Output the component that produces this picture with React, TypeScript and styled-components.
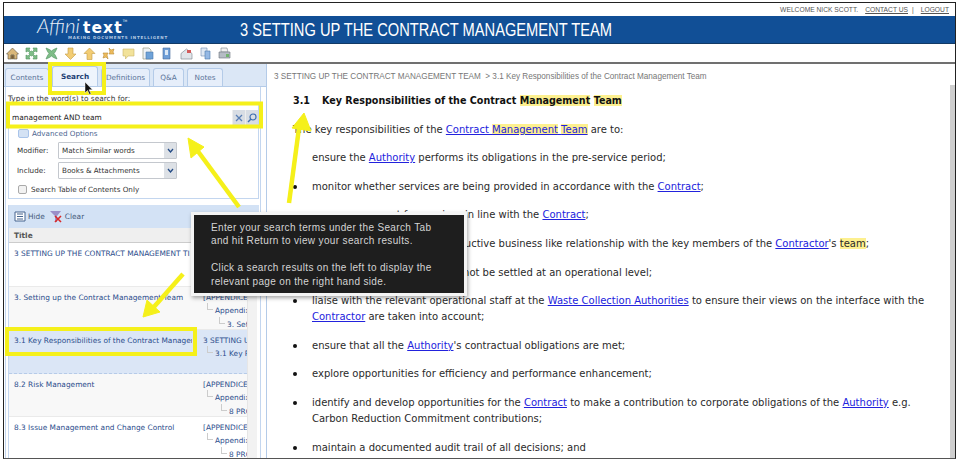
import React from 'react';
import styled, { createGlobalStyle } from 'styled-components';

const Global = createGlobalStyle`
  html, body { margin: 0; padding: 0; background: #fff; overflow: hidden; }
  body { font-family: "DejaVu Sans", sans-serif; }
`;
const Stage = styled.div`position: relative; width: 963px; height: 462px; overflow: hidden; background: #fff;`;
const Frame = styled.div`
  margin: 2px 0 0 3px; width: 953px; height: 457px; border: 1px solid #222; border-bottom-color: #555;
  box-sizing: border-box; display: flex; flex-direction: column; overflow: hidden;
`;
const TopBar = styled.div`
  height: 13px; flex: none; display: flex; justify-content: flex-end; align-items: center; gap: 4px; padding-right: 6px;
  font: 6.7px/13px "Liberation Sans", sans-serif; color: #555;
`;
const TopLink = styled.span`text-decoration: underline; margin-left: ${p => p.$gap || 0}px;`;
const Banner = styled.div`
  height: 28px; flex: none; background: #114f96; border-bottom: 1px solid #123a66; display: flex; align-items: center; box-sizing: border-box;
`;
const Logo = styled.div`width: 236px; flex: none; padding-left: 33px; box-sizing: border-box; color: #fff; line-height: 1; position: relative;`;
const LogoName = styled.div`display: flex; align-items: baseline; height: 19px; margin-top: -2px;`;
const LogoThin = styled.span`font: italic 300 20.500px/19px "Lato", "Liberation Sans", sans-serif; color: #e8eff8;`;
const LogoBold = styled.span`font: bold 15.500px/19px "DejaVu Sans", sans-serif; letter-spacing: 1.100px; margin-left: 3px;`;
const LogoMark = styled.sup`font: 3px/3px "DejaVu Sans", sans-serif; align-self: flex-start; margin-top: 4px;`;
const LogoTag = styled.div`font: bold 4px/6px "DejaVu Sans", sans-serif; letter-spacing: .76px; color: #b7cbe2; padding-left: 31px; white-space: nowrap;`;
const Title = styled.div`
  font: 18.500px/28px "Liberation Sans", sans-serif; color: #fff; white-space: nowrap; transform: scaleX(.793); transform-origin: left center;
`;
const Toolbar = styled.div`
  height: 18px; flex: none; display: flex; align-items: center; gap: 6.300px; padding-left: 2px; border-bottom: 2px solid #707070;
`;
const Main = styled.div`flex: 1; display: flex; min-height: 0;`;
const Left = styled.div`
  width: 263px; flex: none; background: #fff; box-sizing: border-box; display: flex; flex-direction: column; border-right: 1px solid #b4cbe8;
`;
const Tabs = styled.div`
  display: flex; gap: 3px; height: 23px; flex: none; box-sizing: border-box; padding-left: 1px; align-items: flex-end; background: #dbe7f6; border-bottom: 1px solid #b4cbe8;
`;
const Tab = styled.div`
  width: ${p => p.$w}px; height: ${p => p.$active ? 20 : 18}px; box-sizing: border-box; border: 1px solid #b4cbe8; border-bottom: 0;
  border-radius: 3px 3px 0 0; background: ${p => p.$active ? '#eef4fc' : '#e6eefa'}; display: flex; align-items: center; justify-content: center;
  font: ${p => p.$active ? 'bold' : 'normal'} 7.300px "DejaVu Sans", sans-serif; color: ${p => p.$active ? '#1d3f75' : '#5b7499'};
`;
const TabBody = styled.div`
  flex: 1; min-height: 0; margin: 0 5px 0 1px; border: solid #c3d6ef; border-width: 0 1px; padding: 0 1px 0 2px; display: flex; flex-direction: column;
`;
const Hint = styled.div`height: 17px; flex: none; padding-top: 6px; box-sizing: border-box; font: 7.400px/12px "DejaVu Sans", sans-serif; color: #333;`;
const SearchPanel = styled.div`
  height: 95px; flex: none; background: #fff; border: 1px solid #c3d6ef; box-sizing: border-box; padding-top: 4px;
`;
const SearchBox = styled.div`
  height: 17px; display: flex; align-items: center; background: #fff; font: 7.400px "DejaVu Sans", sans-serif; color: #222; padding-left: 3px;
`;
const SearchText = styled.div`flex: 1;`;
const SearchBtn = styled.div`width: 12px; height: 16px; background: #d8dde4; border-left: 1px solid #eee; display: flex; align-items: center; justify-content: center;`;
const Adv = styled.div`display: flex; align-items: center; gap: 3px; height: 11px; margin: 2px 0 0 9px; font: 7.200px "DejaVu Sans", sans-serif; color: #4c6590;`;
const AdvIcon = styled.div`width: 9px; height: 7px; background: #d4e2f4; border: 1px solid #a9c4ea; border-radius: 2px;`;
const FormRow = styled.div`display: flex; align-items: center; margin: ${p => p.$top}px 0 0 8px; height: 17px; font: 7.200px "DejaVu Sans", sans-serif; color: #333;`;
const FormLabel = styled.div`width: 41px;`;
const Select = styled.div`
  width: 119px; height: 17px; display: flex; align-items: center; border: 1px solid #c4c8ce; box-sizing: border-box; padding-left: 3px; border-radius: 1px;
`;
const SelectText = styled.div`flex: 1;`;
const SelectBtn = styled.div`width: 12px; height: 15px; background: #dde1e6; display: flex; align-items: center; justify-content: center;`;
const CheckRow = styled.div`display: flex; align-items: center; gap: 4px; height: 11px; margin: 5px 0 0 9px; font: 7.200px "DejaVu Sans", sans-serif; color: #333;`;
const Check = styled.div`width: 7px; height: 7px; border: 1px solid #aaa; border-radius: 2px; background: #f2f2f2;`;
const Results = styled.div`
  margin-top: 6px; flex: 1; min-height: 0; display: flex; flex-direction: column; background: #fff; border-left: 1px solid #c3d6ef; overflow: hidden;
`;
const ResultsBar = styled.div`
  height: 23px; flex: none; background: #d3e2f5; display: flex; align-items: center; gap: 5px; padding-left: 5px; font: 7.400px "DejaVu Sans", sans-serif; color: #44597a;
`;
const BarItem = styled.div`display: flex; align-items: center; gap: 2px;`;
const ResultsHead = styled.div`
  height: 15px; flex: none; background: #efefef; border-bottom: 1px solid #ccc; box-sizing: border-box; display: flex; align-items: center; padding-left: 5px; font: bold 7.400px "DejaVu Sans", sans-serif; color: #555;
`;
const Row = styled.div`
  height: ${p => p.$h}px; flex: none; display: grid; grid-template-columns: 183px 55px; background: ${p => p.$sel ? '#dbe6f6' : p.$alt ? '#f8f8f8' : '#fff'};
  border-bottom: 1px ${p => p.$sel ? 'dashed #b6cbe8' : 'solid #eaeaea'}; box-sizing: border-box; font: 7.400px/13.400px "DejaVu Sans", sans-serif; color: #2b4d8c;
  overflow: hidden;
`;
const Cell = styled.div`padding: 4px 0 0 ${p => p.$pad}px; white-space: nowrap; overflow: hidden;`;
const Indent = styled.div`
  padding-left: ${p => p.$n}px; position: relative;
  &::before { content: ""; position: absolute; left: ${p => p.$n - 8}px; top: -1px; width: 5px; height: 6px; border: solid #ccc; border-width: 0 0 1px 1px; }
`;
const Track = styled.div`width: 10px; flex: none; background: #f2f2f2; border-left: 1px solid #e6e6e6; box-sizing: border-box;`;
const ResultsInner = styled.div`display: flex; flex: 1; min-height: 0;`;
const ResultsCol = styled.div`width: 238px; flex: none; display: flex; flex-direction: column; overflow: hidden;`;
const Content = styled.div`flex: 1; min-width: 0; padding: 7px 0 0 7px; position: relative; overflow: hidden;`;
const Crumb = styled.div`font: 8.170px/12px "Liberation Sans", sans-serif; color: #777; white-space: nowrap;`;
const Heading = styled.div`display: flex; margin: 10px 0 0 19px; font: bold 9.600px/16px "DejaVu Sans", sans-serif; color: #111; white-space: nowrap;`;
const HeadNum = styled.span`width: 29px;`;
const Mark = styled.span`background: #fdf08f;`;
const Para = styled.div`margin: 12.600px 0 0 19px; font: 10px/16px "DejaVu Sans", sans-serif; color: #2a2a2a; white-space: nowrap;`;
const Bullet = styled.div`
  position: relative; margin: 12.600px 0 0 38px; font: 10px/16px "DejaVu Sans", sans-serif; color: #2a2a2a; white-space: nowrap;
  &::before { content: ""; position: absolute; left: -19px; top: 6px; width: 4px; height: 4px; border-radius: 50%; background: #111; }
`;
const A = styled.a`color: #2222dd; text-decoration: underline;`;
const Scroll = styled.div`position: absolute; right: 0; top: 21px; width: 5px; bottom: 0; background: #cfcfcf;`;
const Overlay = styled.svg`position: absolute; left: 0; top: 0; pointer-events: none;`;
const Callout = styled.div`
  position: absolute; left: 194px; top: 215px; width: 270px; height: 78px; box-sizing: border-box; background: #1e1e1e;
  box-shadow: 0 0 0 3px #f4f4f4, 1px 2px 4px 3px rgba(0,0,0,.35); padding: 6px 0 0 17px; font: 10px/13.400px "Liberation Sans", sans-serif; color: #d4d4d4; letter-spacing: .35px;
`;
const CalloutLine = styled.div`min-height: 13.400px; white-space: nowrap;`;

const Ico = ({ children }: { children: React.ReactNode }) => (
  <svg width="13" height="13" viewBox="0 0 13 13" strokeWidth=".6" stroke="#8c8c70">{children}</svg>
);
const Page = ({ fill }: { fill: string }) => (
  <><path d="M2 1h6l2 2v9H2z" fill="#eef2f6" /><path d="M5 5h7v7H5z" fill={fill} stroke="#4b78ad" /></>
);
const icons: React.ReactNode[] = [
  <><path d="M6.500 1 12.500 7H11v5H8V8H5v4H2V7H.500z" fill="#d9b779" stroke="#5d5140" /><path d="M5 8h3v4H5z" fill="#7d5d34" /></>,
  <path d="M1 1h4L4 3l1.500 1.500 1-.5 1 .5L9 3 8 1h4v4l-2-1-1.500 1.500.5 1-.5 1L10 9l2-1v4H8l1-2-1.500-1.500-1 .5-1-.5L4 10l1 2H1V8l2 1 1.500-1.500-.5-1 .5-1L3 4 1 5z" fill="#7fbd88" stroke="#4f9460" />,
  <path d="M1 1l3.500 1.500L6.500 4l2-1.500L12 1l-1.500 3.500L9 6.500l1.500 2L12 12l-3.500-1.500-2-1.500-2 1.500L1 12l1.500-3.500L4 6.500l-1.500-2z" fill="#7fbd88" stroke="#4f9460" />,
  <path d="M4 1h5v6h3l-5.500 5.500L1 7h3z" fill="#f3cd74" stroke="#c39a45" />,
  <path d="M4 12.500h5V6.500h3L6.500 1 1 6.500h3z" fill="#f3cd74" stroke="#c39a45" />,
  <><path d="M7 1l2 2 3-1-1 3 1 2H7l1-2z" fill="#eebc5e" stroke="#b98c33" /><path d="M6 12l-2-2-3 1 1-3-1-2h5L5 8z" fill="#eebc5e" stroke="#b98c33" /></>,
  <path d="M1 2h11v7H6l-2.500 3V9H1z" fill="#f2e29a" stroke="#c9b568" />,
  <Page fill="#6ea2d8" />,
  <><path d="M3 1h7v11H3z" fill="#6f9fd8" stroke="#44699b" /><path d="M5 3h3v5H5z" fill="#dbe8f6" stroke="none" /></>,
  <><path d="M1 6.500 6.500 2 12 6.500V12H1z" fill="#e1e5ea" stroke="#77808a" /><path d="M7 3h4v3H7z" fill="#d35b5b" stroke="none" /></>,
  <><path d="M2 1h6v8H2z" fill="#dfe8f3" stroke="#6f8cb2" /><path d="M6 4h5v8H6z" fill="#94b8e4" stroke="#4b78ad" /></>,
  <><path d="M3 1h6l1 4H3z" fill="#f0f0f0" stroke="#7b838b" /><path d="M1 5h11v6H1z" fill="#b5bcc4" stroke="#6c747c" /><path d="M8 7h3v3H8z" fill="#72b36e" stroke="none" /></>,
];

const Arrow = () => (
  <svg width="7" height="5" viewBox="0 0 7 5"><path d="M1 1l2.500 3L6 1" fill="none" stroke="#234a85" strokeWidth="1.300" /></svg>
);

export default function App() {
  return (
    <Stage>
      <Global />
      <Frame>
        <TopBar>
          <span>WELCOME NICK SCOTT.</span>
          <TopLink $gap={3}>CONTACT US</TopLink>
          <span>|</span>
          <TopLink $gap={3}>LOGOUT</TopLink>
        </TopBar>
        <Banner>
          <Logo>
            <LogoName><LogoThin>Affini</LogoThin><LogoBold>text</LogoBold><LogoMark>TM</LogoMark></LogoName>
            <LogoTag>MAKING DOCUMENTS INTELLIGENT</LogoTag>
          </Logo>
          <Title>3 SETTING UP THE CONTRACT MANAGEMENT TEAM</Title>
        </Banner>
        <Toolbar>
          {icons.map((ic, n) => <Ico key={n}>{ic}</Ico>)}
        </Toolbar>
        <Main>
          <Left>
            <Tabs>
              <Tab $w={44}>Contents</Tab>
              <Tab $w={46} $active>Search</Tab>
              <Tab $w={49}>Definitions</Tab>
              <Tab $w={31}>Q&amp;A</Tab>
              <Tab $w={36}>Notes</Tab>
            </Tabs>
            <TabBody>
              <Hint>Type in the word(s) to search for:</Hint>
              <SearchPanel>
                <SearchBox>
                  <SearchText>management AND team</SearchText>
                  <SearchBtn>
                    <svg width="8" height="8" viewBox="0 0 8 8"><path d="M1 1l6 6M7 1L1 7" stroke="#5a7fb5" strokeWidth="1.300" /></svg>
                  </SearchBtn>
                  <SearchBtn>
                    <svg width="10" height="10" viewBox="0 0 10 10"><circle cx="6" cy="4" r="3" fill="none" stroke="#3e6fb0" strokeWidth="1.200" /><path d="M4 6L1 9" stroke="#3e6fb0" strokeWidth="1.500" /></svg>
                  </SearchBtn>
                </SearchBox>
                <Adv><AdvIcon />Advanced Options</Adv>
                <FormRow $top={3}>
                  <FormLabel>Modifier:</FormLabel>
                  <Select><SelectText>Match Similar words</SelectText><SelectBtn><Arrow /></SelectBtn></Select>
                </FormRow>
                <FormRow $top={3}>
                  <FormLabel>Include:</FormLabel>
                  <Select><SelectText>Books &amp; Attachments</SelectText><SelectBtn><Arrow /></SelectBtn></Select>
                </FormRow>
                <CheckRow><Check />Search Table of Contents Only</CheckRow>
              </SearchPanel>
              <Results>
                <ResultsBar>
                  <BarItem>
                    <svg width="12" height="11" viewBox="0 0 12 11"><path d="M1 1h10v9H1z" fill="#fff" stroke="#46658f" /><path d="M3 3h6M3 5.500h6M3 8h6" stroke="#46658f" /></svg>
                    Hide
                  </BarItem>
                  <BarItem>
                    <svg width="13" height="12" viewBox="0 0 13 12"><path d="M0 0h11L7 5v6H5V5z" fill="#9a8fc9" /><path d="M5 5l6 6M11 5l-6 6" stroke="#d92a2a" strokeWidth="1.600" /></svg>
                    Clear
                  </BarItem>
                </ResultsBar>
                <ResultsHead>Title</ResultsHead>
                <ResultsInner>
                  <ResultsCol>
                    <Row $h={44}><Cell $pad={5}>3 SETTING UP THE CONTRACT MANAGEMENT TI</Cell><Cell $pad={11}>&nbsp;</Cell></Row>
                    <Row $h={43} $alt><Cell $pad={5}>3. Setting up the Contract Management Team</Cell>
                      <Cell $pad={11}>[APPENDICE<Indent $n={12}>Appendix</Indent><Indent $n={24}>3. Set</Indent></Cell></Row>
                    <Row $h={44} $sel><Cell $pad={5}>3.1 Key Responsibilities of the Contract Managem</Cell>
                      <Cell $pad={11}>3 SETTING U<Indent $n={12}>3.1 Key R</Indent></Cell></Row>
                    <Row $h={43} $alt><Cell $pad={5}>8.2 Risk Management</Cell>
                      <Cell $pad={11}>[APPENDICE<Indent $n={12}>Appendix</Indent><Indent $n={26}>8 PRO</Indent></Cell></Row>
                    <Row $h={43}><Cell $pad={5}>8.3 Issue Management and Change Control</Cell>
                      <Cell $pad={11}>[APPENDICE<Indent $n={12}>Appendix</Indent><Indent $n={26}>8 PRO</Indent></Cell></Row>
                  </ResultsCol>
                  <Track />
                </ResultsInner>
              </Results>
            </TabBody>
          </Left>
          <Content>
            <Crumb>3 SETTING UP THE CONTRACT MANAGEMENT TEAM &nbsp;&gt; 3.1 Key Responsibilities of the Contract Management Team</Crumb>
            <Heading><HeadNum>3.1</HeadNum><span>Key Responsibilities of the Contract <Mark>Management</Mark> <Mark>Team</Mark></span></Heading>
            <Para>The key responsibilities of the <A>Contract <Mark>Management</Mark> <Mark>Team</Mark></A> are to:</Para>
            <Bullet>ensure the <A>Authority</A> performs its obligations in the pre-service period;</Bullet>
            <Bullet>monitor whether services are being provided in accordance with the <A>Contract</A>;</Bullet>
            <Bullet>approve payment for services in line with the <A>Contract</A>;</Bullet>
            <Bullet>develop and maintain a constructive business like relationship with the key members of the <A>Contractor</A>'s <Mark>team</Mark>;</Bullet>
            <Bullet>escalate any issues which cannot be settled at an operational level;</Bullet>
            <Bullet>liaise with the relevant operational staff at the <A>Waste Collection Authorities</A> to ensure their views on the interface with the<br /><A>Contractor</A> are taken into account;</Bullet>
            <Bullet>ensure that all the <A>Authority</A>'s contractual obligations are met;</Bullet>
            <Bullet>explore opportunities for efficiency and performance enhancement;</Bullet>
            <Bullet>identify and develop opportunities for the <A>Contract</A> to make a contribution to corporate obligations of the <A>Authority</A> e.g.<br />Carbon Reduction Commitment contributions;</Bullet>
            <Bullet>maintain a documented audit trail of all decisions; and</Bullet>
            <Scroll />
          </Content>
        </Main>
      </Frame>
      <Overlay width="963" height="462" viewBox="0 0 963 462">
        <g fill="none" stroke="#f5f01a" strokeWidth="4">
          <rect x="50" y="64" width="54" height="29" />
          <rect x="8" y="103.500" width="253" height="23" />
          <rect x="7" y="329" width="188" height="25" />
        </g>
        <g fill="#f5f01a" stroke="#f5f01a">
          <path d="M239 207 197 150" strokeWidth="4.500" />
          <path d="M188 138 204 147 191 158z" />
          <path d="M289 203 299 128" strokeWidth="4.500" />
          <path d="M304 113 311 131 292 128z" />
          <path d="M183 274 153 308" strokeWidth="4.500" />
          <path d="M143 317 147 300 160 312z" />
        </g>
        <path d="M85 82l0 11 2.500-2.500 2 4 1.500-.7-2-4 3.500 0z" fill="#111" stroke="#fff" strokeWidth=".5" />
      </Overlay>
      <Callout>
        <CalloutLine>Enter your search terms under the Search Tab</CalloutLine>
        <CalloutLine>and hit Return to view your search results.</CalloutLine>
        <CalloutLine />
        <CalloutLine>Click a search results on the left to display the</CalloutLine>
        <CalloutLine>relevant page on the right hand side.</CalloutLine>
      </Callout>
    </Stage>
  );
}
